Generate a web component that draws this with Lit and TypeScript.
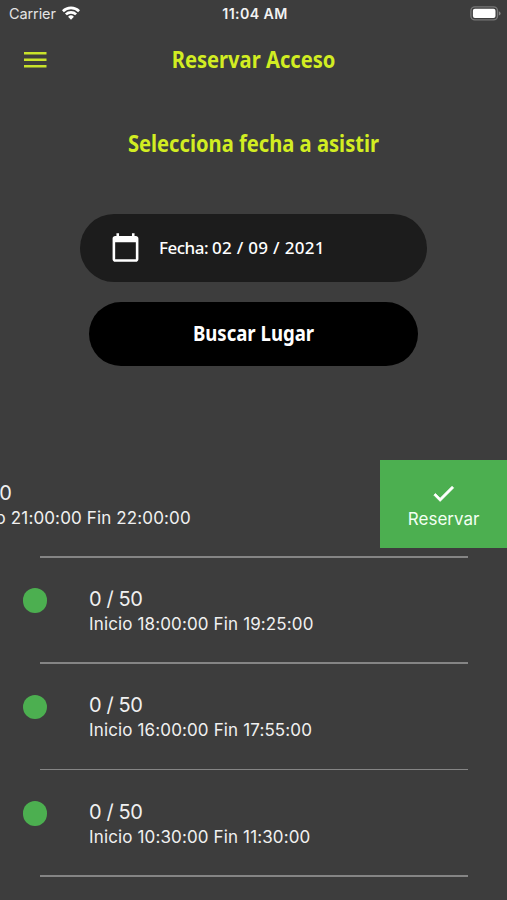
import { LitElement, html, css } from "lit";
import { customElement, property } from "lit/decorators.js";

@customElement("status-bar")
class StatusBar extends LitElement {
  static styles = css`
    :host {
      display: grid;
      grid-template-columns: 1fr auto 1fr;
      align-items: center;
      height: 27px;
      padding: 0 6px 0 9px;
      font: 14.5px/27px Inter, sans-serif;
      color: #e4e4e4;
    }
    .carrier { display: flex; align-items: center; gap: 6px; letter-spacing: -0.1px; }
    .carrier svg { margin-top: -2px; }
    .time { font-weight: 600; font-size: 14.2px; letter-spacing: 0.4px; color: #f2f2f2; }
    .battery { justify-self: end; display: block; }
    svg { display: block; }
  `;
  render() {
    return html`
      <div class="carrier">
        <span>Carrier</span>
        <svg width="18" height="14" viewBox="0 0 18 14" fill="none" stroke="#fff" stroke-width="2.7">
          <path d="M0.9 5.2 A11.5 11.5 0 0 1 17.1 5.2" />
          <path d="M3.9 8.4 A7.3 7.3 0 0 1 14.1 8.4" />
          <path d="M9 13.7 L6.1 10.8 A4.1 4.1 0 0 1 11.9 10.8 Z" fill="#fff" stroke="none" />
        </svg>
      </div>
      <span class="time">11:04 AM</span>
      <svg class="battery" width="31" height="15" viewBox="0 0 31 15">
        <rect x="0.9" y="0.9" width="26.6" height="13" rx="4" fill="none" stroke="#777" stroke-width="1.4" />
        <rect x="2.9" y="2.7" width="22.6" height="9.4" rx="2" fill="#fff" />
        <path d="M28.9 5.2 Q30.6 6 30.6 7.4 T28.9 9.6 Z" fill="#888" />
      </svg>
    `;
  }
}

@customElement("slot-row")
class SlotRow extends LitElement {
  @property() count = "";
  @property() start = "";
  @property() end = "";
  @property({ type: Boolean, reflect: true }) open = false;
  static styles = css`
    :host { display: block; height: 106.35px; }
    .track { display: flex; height: 88px; overflow: hidden; }
    .content {
      flex: 0 0 507px;
      box-sizing: border-box;
      display: flex;
      padding: 21px 0 0 22.7px;
      gap: 41.8px;
      font-family: Inter, sans-serif;
      color: #f0f0f0;
      white-space: nowrap;
    }
    :host([open]) .content { margin-left: -126.7px; }
    .dot { width: 24.6px; height: 24.6px; margin-top: 1.3px; border-radius: 50%; background: #4caf50; }
    .count { font-size: 20px; line-height: 24px; letter-spacing: -0.4px; }
    .hours { font-size: 17px; line-height: 24px; margin-top: 1px; letter-spacing: 0.13px; }
    .action {
      flex: 0 0 126.7px;
      display: flex;
      flex-direction: column;
      align-items: center;
      padding-top: 20.5px;
      background: #4caf50;
      color: #f2fff2;
      font: 17px/24px Inter, sans-serif;
    }
    .action svg { display: block; }
    .divider { height: 18.35px; display: flex; align-items: center; padding: 0 39.5px 0 40px; }
    .line { flex: 1; height: 1.5px; background: #858585; }
  `;
  render() {
    return html`
      <div class="track">
        <div class="content">
          <div class="dot"></div>
          <div>
            <div class="count">${this.count}</div>
            <div class="hours">Inicio ${this.start} Fin ${this.end}</div>
          </div>
        </div>
        ${this.open
          ? html`<div class="action">
              <svg width="27" height="27" viewBox="0 0 24 24" fill="#fff" stroke="#fff" stroke-width="0.7">
                <path d="M9 16.17 4.83 12l-1.42 1.41L9 19 21 7l-1.41-1.41z" />
              </svg>
              <span>Reservar</span>
            </div>`
          : null}
      </div>
      <div class="divider"><div class="line"></div></div>
    `;
  }
}

@customElement("app-root")
class AppRoot extends LitElement {
  static styles = css`
    :host {
      display: block;
      height: 900px;
      overflow: hidden;
      background: #3d3d3d;
      font-family: "Noto Sans", sans-serif;
    }
    .bar {
      display: grid;
      grid-template-columns: 1fr auto 1fr;
      align-items: center;
      height: 65px;
      padding: 0 24px;
    }
    h1, h2 { margin: 0; font-size: 22.3px; line-height: 30px; font-weight: 700; color: #d2ed22; white-space: nowrap; text-align: center; }
    h1, h2 { transform: scaleX(0.904); }
    .search span { transform: scaleX(0.885); margin-top: -1px; }
    h2 { margin-top: 37px; }
    .form { display: flex; flex-direction: column; align-items: center; margin-top: 54.5px; height: 246.2px; }
    .date {
      box-sizing: border-box;
      width: 347px;
      height: 68px;
      border-radius: 34px;
      background: #1c1c1c;
      color: #fff;
      display: flex;
      align-items: center;
      gap: 18px;
      padding-left: 30px;
      font-size: 17px;
      font-weight: 500;
    }
    .date .label { letter-spacing: -0.5px; }
    .date .value { letter-spacing: 0.3px; }
    .search {
      margin-top: 20px;
      width: 329px;
      height: 64.5px;
      border-radius: 33px;
      background: #000;
      color: #fff;
      display: flex;
      align-items: center;
      justify-content: center;
      font-size: 21px;
      font-weight: 700;
    }
    svg { display: block; }
  `;
  render() {
    return html`
      <status-bar></status-bar>
      <div class="bar">
        <svg width="23" height="16" viewBox="0 0 23 16" fill="#c9e32b">
          <path d="M0 0h22.5v2.6H0zM0 6.5h22.5v2.6H0zM0 13h22.5v2.6H0z" />
        </svg>
        <h1>Reservar Acceso</h1>
      </div>
      <h2>Selecciona fecha a asistir</h2>
      <div class="form">
        <div class="date">
          <svg width="31" height="31" viewBox="0 0 24 24" fill="#fff">
            <path d="M20 3h-1V1h-2v2H7V1H5v2H4c-1.1 0-2 .9-2 2v16c0 1.1.9 2 2 2h16c1.1 0 2-.9 2-2V5c0-1.100-.9-2-2-2zm0 18H4V8h16v13z" />
          </svg>
          <div><span class="label">Fecha: </span><span class="value">02 / 09 / 2021</span></div>
        </div>
        <div class="search"><span>Buscar Lugar</span></div>
      </div>
      <slot-row count="1 / 50" start="21:00:00" end="22:00:00" open></slot-row>
      <slot-row count="0 / 50" start="18:00:00" end="19:25:00"></slot-row>
      <slot-row count="0 / 50" start="16:00:00" end="17:55:00"></slot-row>
      <slot-row count="0 / 50" start="10:30:00" end="11:30:00"></slot-row>
    `;
  }
}
